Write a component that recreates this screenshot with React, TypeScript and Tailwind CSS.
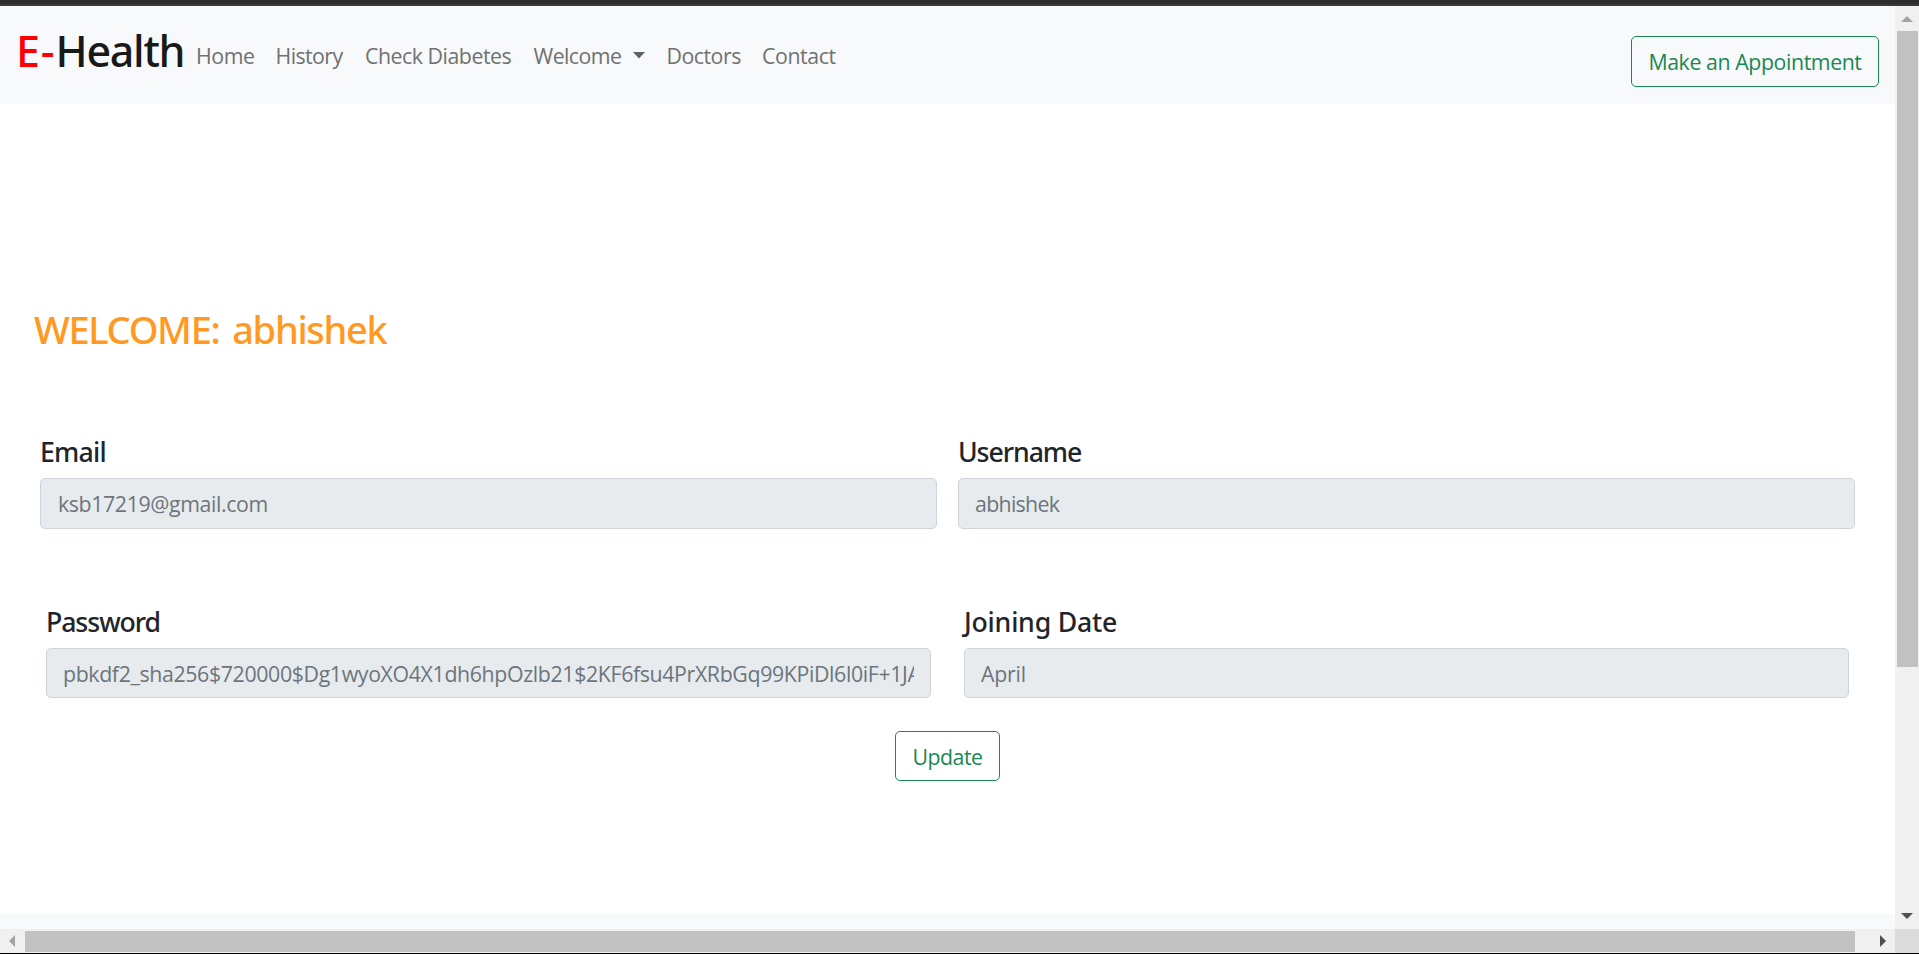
type FieldProps = {
  id: string;
  label: string;
  value: string;
  labelClass: string;
  inputClass: string;
};

function Field({ id, label, value, labelClass, inputClass }: FieldProps) {
  return (
    <div className="flex min-w-0 flex-1 flex-col gap-[10px]">
      <label
        htmlFor={id}
        className={`h-8 font-['Noto_Sans',sans-serif] text-[26.67px] leading-8 font-medium whitespace-nowrap text-[#212529] ${labelClass}`}
      >
        {label}
      </label>
      <input
        id={id}
        disabled
        placeholder={value}
        className={`w-full rounded-[5px] border border-[#ced4da] bg-[#e8ebee] text-[21.33px] placeholder:text-[#6c757d] placeholder:opacity-100 ${inputClass}`}
      />
    </div>
  );
}

function Navbar() {
  return (
    <nav className="flex h-[98px] shrink-0 justify-between bg-[#f8f9fb] pr-4 pl-4">
      <div className="flex">
        <a className="mt-3 h-[66px] w-[180px] font-['Noto_Sans',sans-serif] text-[43px] leading-[66px] font-medium tracking-[-1.3px] whitespace-nowrap text-[#191919]">
          <span className="tracking-[0.9px] text-[#ff0000]">E-</span>Health
        </a>
        <ul className="mt-[34px] flex h-8 text-[21.33px] leading-8 whitespace-nowrap text-[#707171]">
          <li className="w-[79.5px] tracking-[-0.4px]">Home</li>
          <li className="w-[89.5px] tracking-[-0.57px]">History</li>
          <li className="w-[168.5px] tracking-[-0.48px]">Check Diabetes</li>
          <li className="flex w-[133px] tracking-[-0.56px]">
            Welcome
            <svg className="mt-[12px] ml-[12px]" width="12" height="7" viewBox="0 0 12 7" fill="#606162">
              <path d="M0 0H12L6 6.4Z" />
            </svg>
          </li>
          <li className="w-[95.5px] tracking-[-0.5px]">Doctors</li>
          <li className="tracking-[-0.42px]">Contact</li>
        </ul>
      </div>
      <button className="mt-[30px] h-[51px] w-[248px] rounded-[5px] border border-[#198754] text-[21.33px] tracking-[-0.42px] whitespace-nowrap text-[#198754]">
        Make an Appointment
      </button>
    </nav>
  );
}

function VerticalScrollbar() {
  return (
    <div className="flex w-6 shrink-0 flex-col items-center bg-[#f0f0f0]">
      <div className="flex h-[25px] items-center">
        <svg width="12" height="6" viewBox="0 0 12 6" fill="#a3a3a3">
          <path d="M6 0L12 6H0Z" />
        </svg>
      </div>
      <div className="ml-px h-[636px] w-[21px] bg-[#c1c1c1]" />
      <div className="flex flex-1 items-end pb-[10px]">
        <svg width="12" height="6" viewBox="0 0 12 6" fill="#505050">
          <path d="M0 0H12L6 6Z" />
        </svg>
      </div>
    </div>
  );
}

function HorizontalScrollbar() {
  return (
    <div className="flex h-6 shrink-0 bg-[#f0f0f0]">
      <div className="flex w-[25px] items-center pl-[9px]">
        <svg width="6" height="12" viewBox="0 0 6 12" fill="#a3a3a3">
          <path d="M6 0V12L0 6Z" />
        </svg>
      </div>
      <div className="mt-[2px] h-[21px] w-[1830px] bg-[#c1c1c1]" />
      <div className="flex flex-1 items-center pl-[25px]">
        <svg width="6" height="12" viewBox="0 0 6 12" fill="#505050">
          <path d="M0 0L6 6L0 12Z" />
        </svg>
      </div>
      <div className="w-6 bg-[#dcdcdc]" />
    </div>
  );
}

export default function App() {
  return (
    <div className="flex h-[954px] w-[1919px] flex-col overflow-hidden bg-white font-['Open_Sans',sans-serif]">
      <div className="h-[6px] shrink-0 border-b-2 border-[#3a383a] bg-[#2d2d2d]" />
      <div className="flex h-[923px] shrink-0">
        <div className="flex min-w-0 flex-1 flex-col">
          <Navbar />
          <main className="flex flex-1 flex-col pt-[202px]">
            <h1 className="ml-[34px] h-[46px] font-['Noto_Sans',sans-serif] text-[38px] leading-[46px] font-medium tracking-[-1.3px] [word-spacing:4px] whitespace-nowrap text-[#ff9922]">
              WELCOME: abhishek
            </h1>
            <div className="mt-[84px] flex gap-[21px] pr-10 pl-10">
              <Field id="email" label="Email" value="ksb17219@gmail.com" labelClass="tracking-[-0.76px]" inputClass="h-[51px] pr-4 pl-[17px] tracking-[-0.39px]" />
              <Field id="username" label="Username" value="abhishek" labelClass="tracking-[-1.05px]" inputClass="h-[51px] pr-4 pl-4 tracking-[-0.7px]" />
            </div>
            <div className="mt-[77px] flex gap-[33px] pr-[46px] pl-[46px]">
              <Field id="password" label="Password" value="pbkdf2_sha256$720000$Dg1wyoXO4X1dh6hpOzlb21$2KF6fsu4PrXRbGq99KPiDl6l0iF+1JA" labelClass="tracking-[-1.07px]" inputClass="h-[50px] px-4 pt-px tracking-[-0.37px]" />
              <Field id="joined" label="Joining Date" value="April" labelClass="tracking-[-0.2px]" inputClass="h-[50px] px-4 pt-px tracking-[-0.23px]" />
            </div>
            <button className="mt-[33px] h-[50px] w-[105px] self-center rounded-[5px] border border-[#198754] pt-px text-[21.33px] tracking-[-0.48px] text-[#198754]">
              Update
            </button>
          </main>
          <div className="h-[15px] shrink-0 bg-[#f8f9fb]" />
        </div>
        <VerticalScrollbar />
      </div>
      <HorizontalScrollbar />
      <div className="h-px shrink-0 bg-black" />
    </div>
  );
}
